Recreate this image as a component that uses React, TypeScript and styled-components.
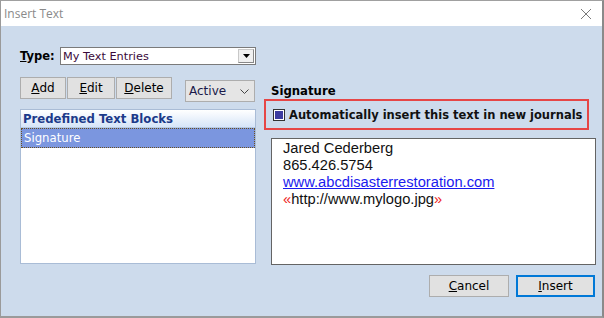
import { createGlobalStyle, styled } from 'styled-components';

const GlobalStyle = createGlobalStyle`
    html, body {
        margin: 0;
        padding: 0;
        background: #ffffff;
    }
    * {
        box-sizing: border-box;
    }
`;

interface ButtonProps {
    width: number;
    primary?: boolean;
}

const App = () => {
    return (
        <>
            <GlobalStyle />
            <Window>
                <TitleBar>
                    <Title>Insert Text</Title>
                    <CloseIcon width="12" height="12" viewBox="0 0 12 12">
                        <path d="M1 1 L11 11 M11 1 L1 11" stroke="#7a7a7a" strokeWidth="1" />
                    </CloseIcon>
                </TitleBar>
                <Body>
                    <Main>
                        <LeftColumn>
                            <TypeRow>
                                <Label>
                                    <u>T</u>ype:
                                </Label>
                                <Select>
                                    <SelectText>My Text Entries</SelectText>
                                    <DropButton>
                                        <svg width="7" height="4" viewBox="0 0 7 4">
                                            <path d="M0 0 H7 L3.5 4 Z" fill="#000" />
                                        </svg>
                                    </DropButton>
                                </Select>
                            </TypeRow>
                            <ButtonRow>
                                <Button width={46}>
                                    <u>A</u>dd
                                </Button>
                                <Button width={48}>
                                    <u>E</u>dit
                                </Button>
                                <Button width={56}>
                                    <u>D</u>elete
                                </Button>
                                <StatusSelect>
                                    <span>Active</span>
                                    <svg width="9" height="5" viewBox="0 0 9 5">
                                        <path d="M0.5 0.5 L4.5 4.5 L8.5 0.5" stroke="#444" fill="none" />
                                    </svg>
                                </StatusSelect>
                            </ButtonRow>
                            <List>
                                <ListHeader>Predefined Text Blocks</ListHeader>
                                <ListItem>Signature</ListItem>
                            </List>
                        </LeftColumn>
                        <RightColumn>
                            <SectionTitle>Signature</SectionTitle>
                            <Highlight>
                                <CheckBox>
                                    <CheckFill />
                                </CheckBox>
                                <CheckLabel>Automatically insert this text in new journals</CheckLabel>
                            </Highlight>
                            <TextArea>
                                <Line>Jared Cederberg</Line>
                                <Line>865.426.5754</Line>
                                <LinkLine>www.abcdisasterrestoration.com</LinkLine>
                                <Line>
                                    <Mark>«</Mark>http://www.mylogo.jpg<Mark>»</Mark>
                                </Line>
                            </TextArea>
                        </RightColumn>
                    </Main>
                    <Footer>
                        <Button width={80}>
                            <u>C</u>ancel
                        </Button>
                        <Button width={79} primary>
                            <u>I</u>nsert
                        </Button>
                    </Footer>
                </Body>
            </Window>
        </>
    );
};

export default App;

const Window = styled.div`
    width: 604px;
    height: 318px;
    display: flex;
    flex-direction: column;
    border-left: 1px solid #9a9a9a;
    border-right: 2px solid #8a8a8a;
    border-bottom: 2px solid #9a9a9a;
    border-top: 1px solid #a0a0a0;
    background: #cddbec;
    overflow: hidden;
`;

const TitleBar = styled.div`
    height: 25px;
    display: flex;
    align-items: center;
    justify-content: space-between;
    background: #ffffff;
    padding: 0 10px 0 3px;
`;

const Title = styled.div`
    font-family: 'Open Sans', 'Noto Sans', sans-serif;
    font-size: 12px;
    color: #8a8a8a;
`;

const CloseIcon = styled.svg`
    display: block;
`;

const Body = styled.div`
    flex: 1;
    display: flex;
    flex-direction: column;
    padding: 21px 7px 0 19px;
    font-family: 'DejaVu Sans', Verdana, sans-serif;
`;

const Main = styled.div`
    display: flex;
    gap: 8px;
`;

const LeftColumn = styled.div`
    width: 237px;
    display: flex;
    flex-direction: column;
`;

const TypeRow = styled.div`
    display: flex;
    align-items: center;
    height: 18px;
`;

const Label = styled.div`
    width: 40px;
    font-size: 11.5px;
    font-weight: bold;
    color: #000;
`;

const Select = styled.div`
    width: 196px;
    height: 18px;
    display: flex;
    align-items: center;
    justify-content: space-between;
    background: #fff;
    border: 1px solid #7a7a7a;
    padding: 0 1px 0 2px;
`;

const SelectText = styled.span`
    font-size: 11.3px;
    color: #3a0a3a;
`;

const DropButton = styled.div`
    width: 16px;
    height: 14px;
    display: flex;
    align-items: center;
    justify-content: center;
    background: #f0f0f0;
    border: 1px solid #c8c8c8;
    border-right-color: #888;
    border-bottom-color: #888;
`;

const ButtonRow = styled.div`
    display: flex;
    align-items: flex-start;
    gap: 1px;
    margin-top: 12px;
`;

const Button = styled.div<ButtonProps>`
    width: ${(props) => props.width}px;
    height: 22px;
    display: flex;
    align-items: center;
    justify-content: center;
    background: #e1e1e1;
    border: ${(props) => (props.primary ? '2px solid #0078d7' : '1px solid #adadad')};
    font-size: 12px;
    color: #000;
`;

const StatusSelect = styled.div`
    width: 70px;
    height: 22px;
    margin: 3px 0 0 12px;
    display: flex;
    align-items: center;
    justify-content: space-between;
    padding: 0 5px 0 3px;
    background: #e5e5e5;
    border: 1px solid #adadad;
    font-size: 12px;
    color: #1a1a4a;
`;

const List = styled.div`
    height: 155px;
    margin-top: 7px;
    background: #fff;
    border: 1px solid #a9bcd6;
`;

const ListHeader = styled.div`
    height: 18px;
    display: flex;
    align-items: center;
    padding-left: 2px;
    background: linear-gradient(to bottom, #ffffff, #d6e5f8);
    border-bottom: 1px solid #b8cbe4;
    font-size: 11.7px;
    font-weight: bold;
    color: #1c3a8a;
`;

const ListItem = styled.div`
    height: 20px;
    display: flex;
    align-items: center;
    padding-left: 2px;
    background: #7b96df;
    border: 1px dotted #6a5020;
    font-size: 11.7px;
    color: #ffffff;
`;

const RightColumn = styled.div`
    flex: 1;
    display: flex;
    flex-direction: column;
    padding-top: 37px;
`;

const SectionTitle = styled.div`
    margin-left: 7px;
    font-size: 11.7px;
    font-weight: bold;
    color: #000;
`;

const Highlight = styled.div`
    width: 325px;
    height: 31px;
    margin-top: 1px;
    display: flex;
    align-items: center;
    gap: 4px;
    padding-left: 7px;
    border: 2px solid #e64646;
`;

const CheckBox = styled.div`
    width: 12px;
    height: 12px;
    display: flex;
    align-items: center;
    justify-content: center;
    border: 1px solid #333;
    background: #fff;
`;

const CheckFill = styled.div`
    width: 8px;
    height: 8px;
    background: #3c3ca0;
`;

const CheckLabel = styled.span`
    font-size: 11.5px;
    font-weight: bold;
    color: #111;
`;

const TextArea = styled.div`
    width: 325px;
    height: 127px;
    margin: 8px 0 0 7px;
    padding: 1px 11px;
    background: #fff;
    border: 1px solid #646464;
    font-family: 'Liberation Sans', Arial, sans-serif;
    font-size: 14.7px;
    line-height: 17px;
`;

const Line = styled.div`
    color: #111;
`;

const LinkLine = styled.div`
    color: #1a1aee;
    text-decoration: underline;
`;

const Mark = styled.span`
    color: #ee2020;
`;

const Footer = styled.div`
    display: flex;
    justify-content: flex-end;
    gap: 7px;
    margin-top: 10px;
    padding-right: 0;
`;
